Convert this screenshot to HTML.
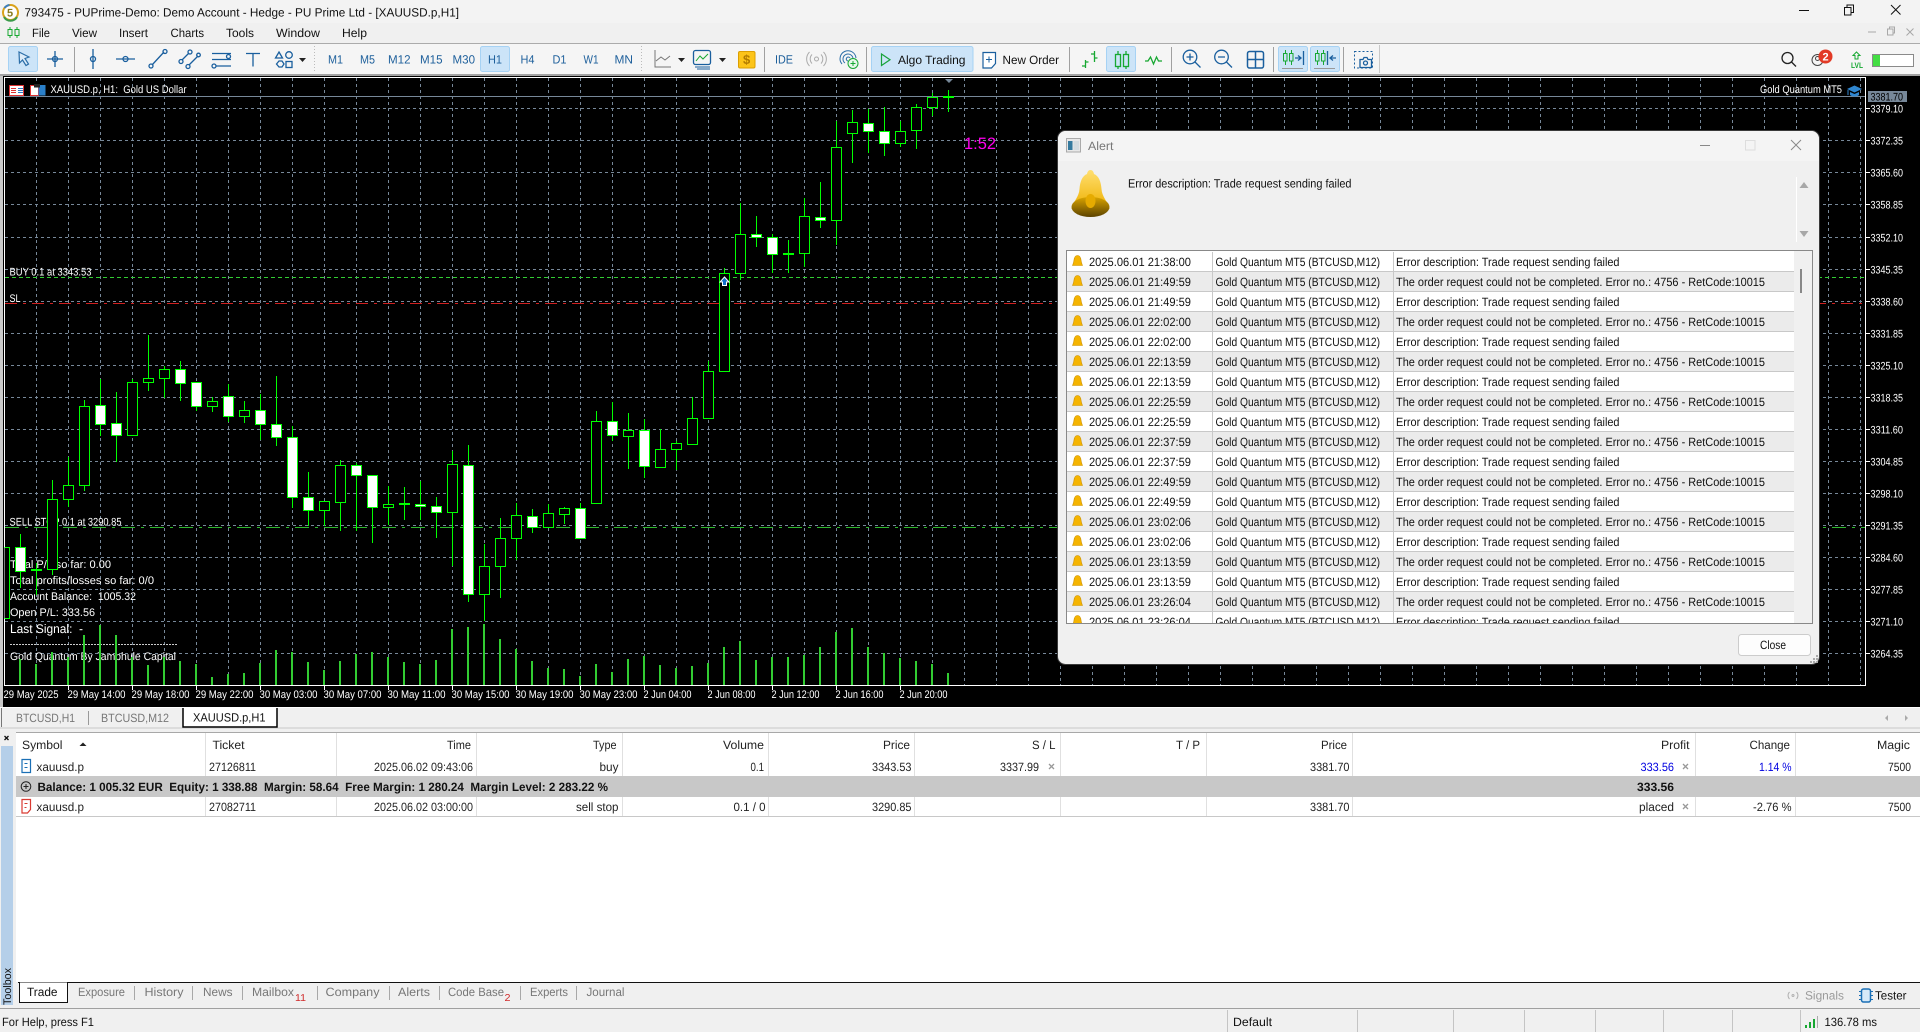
<!DOCTYPE html>
<html lang="en">
<head>
<meta charset="utf-8">
<title>793475 - PUPrime-Demo</title>
<style>
html,body{margin:0;padding:0;background:#f0f0f0;width:1920px;height:1032px;overflow:hidden}
svg{display:block}
text{font-family:"Liberation Sans",sans-serif;font-size:12px;white-space:pre;fill:#111;text-rendering:geometricPrecision}
.c text,text.c{font-size:11px;fill:#fff}
.tf text{fill:#1d5f9b}
.g text{fill:#777}
.h text{fill:#222}
.b text{font-weight:bold;fill:#111}
.ic{fill:none;stroke:#1a5f9e;stroke-width:1.3}
.gr{fill:none;stroke:#17a832;stroke-width:1.3}
.gt{fill:none;stroke:#17a832;stroke-width:1}
.sep{stroke:#a0a0a0;stroke-width:1;shape-rendering:crispEdges}
.btn{fill:#cce4f8;stroke:#a6d2f4}
</style>
</head>
<body>
<svg xmlns="http://www.w3.org/2000/svg" width="1920" height="1032" viewBox="0 0 1920 1032">
<defs>
<linearGradient id="bg1" x1="0" y1="0" x2="0" y2="1"><stop offset="0" stop-color="#ffdf70"/><stop offset="1" stop-color="#eeb000"/></linearGradient>
<linearGradient id="bg2" x1="0" y1="0" x2="0" y2="1"><stop offset="0" stop-color="#d9a400"/><stop offset="1" stop-color="#5c4300"/></linearGradient>
<clipPath id="lc"><rect x="1067" y="252" width="727" height="371"/></clipPath>
<clipPath id="ch"><rect x="5" y="78" width="1860" height="607"/></clipPath>
<g id="sb"><path d="M0 -5.500C-2.300 -5.500 -3.300 -3 -3.500 -1C-3.700 1.500 -4.500 3 -5 4.500H5C4.500 3 3.700 1.500 3.500 -1C3.300 -3 2.300 -5.500 0 -5.500Z" fill="#f5b400" stroke="#c98f00" stroke-width=".6"/></g>
</defs>

<!-- window chrome -->
<rect width="1920" height="23" fill="#f3f3f3"/>
<rect y="23" width="1920" height="20" fill="#f0f0f0"/>
<rect y="43" width="1920" height="1" fill="#ababab"/>
<rect y="44" width="1920" height="30" fill="#f5f5f5"/>
<rect y="74" width="1920" height="2" fill="#a2a2a2"/>

<!-- title bar -->
<circle cx="10.500" cy="12.500" r="7.500" fill="#fff" stroke="#d9a21b" stroke-width="2"/>
<path d="M4 17a7.500 7.500 0 0 0 13 0" fill="none" stroke="#3a9a4a" stroke-width="2"/>
<path d="M4.500 8a7.500 7.500 0 0 1 5-3" fill="none" stroke="#3b7fc0" stroke-width="2"/>
<text x="7" y="16.500" style="font-size:11px;font-weight:bold;fill:#8a7a20">5</text>
<text x="24.500" y="16.500" textLength="434.500" lengthAdjust="spacingAndGlyphs">793475 - PUPrime-Demo: Demo Account - Hedge - PU Prime Ltd - [XAUUSD.p,H1]</text>
<path d="M1799 10.500h10" stroke="#111" fill="none"/>
<path d="M1844.500 7.500h6.500v7.500h-6.500zM1847 7.500v-2.500h6.500v7.500h-2.500" stroke="#111" fill="none"/>
<path d="M1891 5l9.500 9.500M1900.500 5l-9.500 9.500" stroke="#111" fill="none"/>

<!-- menu -->
<g fill="none" stroke="#17a832"><path d="M10 27v11M17 27v11"/><rect x="8" y="29.500" width="4" height="6" fill="#f0f0f0"/><rect x="15" y="29.500" width="4" height="6" fill="#f0f0f0"/></g>
<text x="32" y="37" textLength="18" lengthAdjust="spacingAndGlyphs">File</text>
<text x="72" y="37" textLength="25" lengthAdjust="spacingAndGlyphs">View</text>
<text x="119" y="37" textLength="29" lengthAdjust="spacingAndGlyphs">Insert</text>
<text x="170.500" y="37" textLength="33.500" lengthAdjust="spacingAndGlyphs">Charts</text>
<text x="226" y="37" textLength="28" lengthAdjust="spacingAndGlyphs">Tools</text>
<text x="276" y="37" textLength="44" lengthAdjust="spacingAndGlyphs">Window</text>
<text x="342" y="37" textLength="25" lengthAdjust="spacingAndGlyphs">Help</text>
<g stroke="#a8a8a8" fill="none"><path d="M1868 32h8"/><path d="M1887.500 34v-5h5.500v6h-5.500zM1889.500 29v-2h5v6h-1.500"/><path d="M1906.500 28.500l7 7M1913.500 28.500l-7 7"/></g>

<!-- toolbar -->
<rect class="btn" x="8.500" y="46.500" width="29" height="25" rx="2"/>
<path d="M19 52l10 5-4 1.500 3.500 5.500-2.500 1.500-3.500-5.500-3 3z" fill="#dcebf8" stroke="#2b6ea8" stroke-width="1.200"/>
<g class="ic">
<path d="M47 59h16M55 51v16"/><circle cx="55" cy="59" r="2.500"/>
<path d="M93 49v20"/><circle cx="93" cy="59" r="2.500"/>
<path d="M116 59h19"/><circle cx="125.500" cy="59" r="2.500"/>
<path d="M152 65l12-13"/><circle cx="151" cy="66" r="2"/><circle cx="165" cy="51.500" r="2"/>
<path d="M182 60l7-7M189 65l9-9"/><circle cx="190" cy="52" r="2"/><circle cx="181" cy="61.500" r="2"/><circle cx="188" cy="66.500" r="2"/><circle cx="198.500" cy="55" r="1.800"/>
<path d="M212 53.500h19M212 59.500h19M216 66h15"/><circle cx="228.500" cy="56.500" r="2"/><circle cx="214" cy="66" r="2"/>
<path d="M246 53.500h14M253 53.500v13"/>
<path d="M279 52l3.500 6h-7z"/><circle cx="289" cy="55" r="3.300"/><path d="M276.500 64l2.500-3 3 0 2 3-2 3h-3z"/><rect x="286" y="61.500" width="6" height="6"/>
</g>
<path d="M299 58h7l-3.500 4z" fill="#222"/>
<path class="sep" d="M74.500 47v25"/>
<path d="M314.500 46v27" stroke="#bbb" stroke-dasharray="1 2"/>

<rect class="btn" x="480.500" y="46.500" width="29" height="25" rx="2"/>
<g class="tf">
<text x="328" y="63.500" textLength="15" lengthAdjust="spacingAndGlyphs">M1</text>
<text x="360" y="63.500" textLength="15" lengthAdjust="spacingAndGlyphs">M5</text>
<text x="388" y="63.500" textLength="22.500" lengthAdjust="spacingAndGlyphs">M12</text>
<text x="420" y="63.500" textLength="22.500" lengthAdjust="spacingAndGlyphs">M15</text>
<text x="452.500" y="63.500" textLength="22.500" lengthAdjust="spacingAndGlyphs">M30</text>
<text x="488" y="63.500" textLength="14" lengthAdjust="spacingAndGlyphs">H1</text>
<text x="520.500" y="63.500" textLength="14" lengthAdjust="spacingAndGlyphs">H4</text>
<text x="552.500" y="63.500" textLength="14" lengthAdjust="spacingAndGlyphs">D1</text>
<text x="583.500" y="63.500" textLength="15" lengthAdjust="spacingAndGlyphs">W1</text>
<text x="614.500" y="63.500" textLength="18.500" lengthAdjust="spacingAndGlyphs">MN</text>
<text x="775" y="63.500" textLength="18" lengthAdjust="spacingAndGlyphs">IDE</text>
</g>
<path d="M641.500 46v27" stroke="#bbb" stroke-dasharray="1 2"/>
<path d="M655 50v17h16M656 61l5-4 4 3 5-4" fill="none" stroke="#777" stroke-width="1"/>
<path d="M678 58h7l-3.500 4z" fill="#222"/>
<rect x="693.500" y="50.500" width="17" height="14" rx="2" class="ic"/>
<path d="M696 61l4-5 3 3 5-5" fill="none" stroke="#17a832"/>
<path d="M695 67h15M697 69h13" stroke="#1a5f9e"/>
<path d="M719 58h7l-3.500 4z" fill="#222"/>
<rect x="738.500" y="51.500" width="16.500" height="16.500" rx="1.500" fill="#fcc419" stroke="#dc9f00"/>
<text x="743" y="64" style="font-size:13px;font-weight:bold;fill:#b07a00">$</text>
<path class="sep" d="M764.500 47v25"/>
<g fill="none" stroke="#aaa"><circle cx="816.500" cy="59" r="2"/><path d="M812 54.500a6.500 6.500 0 0 0 0 9M821 54.500a6.500 6.500 0 0 1 0 9M809.500 52a10 10 0 0 0 0 14M823.500 52a10 10 0 0 1 0 14"/></g>
<g fill="none" stroke="#2b6ea8"><path d="M842 64a8 8 0 1 1 14-6M845 63a5 5 0 1 1 8-4M848 61a2 2 0 1 1 2-3"/></g>
<circle cx="853" cy="63.500" r="5" fill="#e8f8ec" stroke="#17a832"/><path d="M850.500 63.500h5M853 61v5" stroke="#17a832"/>
<path class="sep" d="M866.500 47v25"/>
<rect class="btn" x="871.500" y="46.500" width="101.500" height="25" rx="2"/>
<path d="M881.500 54v11.500l8.500-5.750z" fill="none" stroke="#19a23a" stroke-width="1.200"/>
<text x="898" y="64" textLength="67.500" lengthAdjust="spacingAndGlyphs">Algo Trading</text>
<path d="M983 52.500h12.500v11l-4 4.500h-8.500z" fill="#fff" stroke="#1a5f9e" stroke-width="1.200"/>
<path d="M986 59.500h6M989 56.500v6" stroke="#1a5f9e"/>
<text x="1002.500" y="64" textLength="56.500" lengthAdjust="spacingAndGlyphs">New Order</text>
<path class="sep" d="M1069.500 47v25"/>
<path class="gr" d="M1085.500 60v8M1082 66h3.500M1085.500 62h3M1094.500 51v11M1091 54h3.500M1094.500 58h3"/>
<rect class="btn" x="1106.500" y="46.500" width="29" height="25" rx="2"/>
<path class="gr" d="M1118 51v3M1118 66v3M1126 51v3M1126 66v3"/>
<rect class="gr" x="1115.500" y="54.500" width="5" height="12"/><rect class="gr" x="1123.500" y="54.500" width="5" height="12"/>
<path class="gr" d="M1145 61h3l2.500-4 3 7 3-7 2 4h3.500"/>
<path class="sep" d="M1171.500 47v25"/>
<g class="ic">
<circle cx="1190" cy="57" r="6.800"/><path d="M1195 62l5.500 5.500M1186.500 57h7M1190 53.500v7"/>
<circle cx="1221.500" cy="57" r="6.800"/><path d="M1226.500 62l5.500 5.500M1218 57h7"/>
<rect x="1247.500" y="51.500" width="16" height="16.500" rx="2" style="stroke-width:1.500"/><path d="M1255.500 51.500v16.500M1247.500 59.500h16" style="stroke-width:1.500"/>
</g>
<path class="sep" d="M1273.500 47v25"/>
<rect class="btn" x="1278.500" y="46.500" width="29" height="25" rx="2"/>
<rect class="btn" x="1310.500" y="46.500" width="29" height="25" rx="2"/>
<path class="gt" d="M1285.500 50v3M1285.500 61v4M1291.500 50v3M1291.500 61v4"/><rect class="gt" x="1283.500" y="53.500" width="3.500" height="7.500"/><rect class="gt" x="1289.500" y="53.500" width="3.500" height="7.500"/>
<path class="ic" d="M1295 58h6M1298 55.500l3 2.500-3 2.500M1303.500 51v14"/>
<path d="M1282 68.500h21M1314 68.500h21" stroke="#999"/>
<path class="gt" d="M1317.500 50v3M1317.500 61v4M1323.500 50v3M1323.500 61v4"/><rect class="gt" x="1315.500" y="53.500" width="3.500" height="7.500"/><rect class="gt" x="1321.500" y="53.500" width="3.500" height="7.500"/>
<path class="ic" d="M1336 58h-6M1333 55.500l-3 2.500 3 2.500M1327.500 51v14"/>
<path class="sep" d="M1343.500 47v25"/>
<rect x="1354.500" y="51.500" width="18" height="16.500" fill="none" stroke="#1a5f9e" stroke-dasharray="2 2"/>
<path class="ic" d="M1360 67.500v-8h3l1-2h3l1 2h3.500v8z"/><circle class="ic" cx="1365.500" cy="63" r="2"/>
<path d="M1379.500 45v28" stroke="#c8c8c8"/>

<circle cx="1787.500" cy="58" r="5.500" fill="none" stroke="#222" stroke-width="1.300"/><path d="M1791.500 62l4.500 4.500" stroke="#222" stroke-width="1.300"/>
<circle cx="1817.500" cy="60" r="5.500" fill="none" stroke="#444"/><circle cx="1817.500" cy="58.500" r="2" fill="none" stroke="#444"/>
<circle cx="1825.500" cy="56.500" r="7" fill="#e23a26"/>
<text x="1822.500" y="60.500" style="font-size:11px;fill:#fff;font-weight:bold">2</text>
<path d="M1856.500 52l3.500 3.500h-2v3.500h-3v-3.500h-2z" fill="none" stroke="#17a832"/>
<text x="1851" y="68" textLength="12" lengthAdjust="spacingAndGlyphs" style="font-size:8px;fill:#17a832;font-weight:bold">LVL</text>
<rect x="1872.500" y="54.500" width="41" height="12" fill="#fff" stroke="#8a8a8a"/>
<rect x="1873" y="55" width="7" height="11" fill="#43dd43"/>

<!-- chart -->
<rect y="76" width="1920" height="631" fill="#000"/>
<rect y="76" width="3" height="631" fill="#c9c9c9"/>
<path d="M4.500 77.500H1865.500V685.500H4.500z" fill="none" stroke="#fff"/>
<g clip-path="url(#ch)" fill="none" stroke="#778899">
<path stroke-dasharray="3 3" d="M5 108.500H1865M5 140.500H1865M5 172.500H1865M5 204.500H1865M5 237.500H1865M5 269.500H1865M5 301.500H1865M5 333.500H1865M5 365.500H1865M5 397.500H1865M5 429.500H1865M5 461.500H1865M5 493.500H1865M5 525.500H1865M5 557.500H1865M5 589.500H1865M5 621.500H1865M5 653.500H1865"/>
<path stroke-dasharray="3 3" d="M36.500 78V685M68.500 78V685M100.500 78V685M132.500 78V685M164.500 78V685M196.500 78V685M228.500 78V685M260.500 78V685M292.500 78V685M324.500 78V685M356.500 78V685M388.500 78V685M420.500 78V685M452.500 78V685M484.500 78V685M516.500 78V685M548.500 78V685M580.500 78V685M612.500 78V685M644.500 78V685M676.500 78V685M708.500 78V685M740.500 78V685M772.500 78V685M804.500 78V685M836.500 78V685M868.500 78V685M900.500 78V685M932.500 78V685M964.500 78V685M996.500 78V685M1028.500 78V685M1060.500 78V685M1092.500 78V685M1124.500 78V685M1156.500 78V685M1188.500 78V685M1220.500 78V685M1252.500 78V685M1284.500 78V685M1316.500 78V685M1348.500 78V685M1380.500 78V685M1412.500 78V685M1444.500 78V685M1476.500 78V685M1508.500 78V685M1540.500 78V685M1572.500 78V685M1604.500 78V685M1636.500 78V685M1668.500 78V685M1700.500 78V685M1732.500 78V685M1764.500 78V685M1796.500 78V685M1828.500 78V685M1860.500 78V685"/>
<path d="M5 96.500H1865"/>
<path d="M5 277.500H1865" stroke="#32cd32" stroke-dasharray="4 3"/>
<path d="M5 303.500H1865" stroke="#d02020" stroke-dasharray="12 6 3 6"/>
<path d="M5 527.500H1865" stroke="#2eb82e" stroke-dasharray="14 6 3 6"/>
</g>

<!-- chart overlay text -->
<g class="c">
<text x="50.500" y="93" textLength="136" lengthAdjust="spacingAndGlyphs">XAUUSD.p, H1:  Gold US Dollar</text>
<text x="1760" y="93" textLength="82" lengthAdjust="spacingAndGlyphs">Gold Quantum MT5</text>
<text x="9.500" y="275.500" textLength="82" lengthAdjust="spacingAndGlyphs">BUY 0.1 at 3343.53</text>
<text x="9.500" y="302" textLength="11" lengthAdjust="spacingAndGlyphs">SL</text>
<text x="9.500" y="525.500" textLength="112" lengthAdjust="spacingAndGlyphs">SELL STOP 0.1 at 3290.85</text>
<text x="10" y="568" textLength="101" lengthAdjust="spacingAndGlyphs">Total P/L so far: 0.00</text>
<text x="10" y="584" textLength="144" lengthAdjust="spacingAndGlyphs">Total profits/losses so far: 0/0</text>
<text x="10" y="600" textLength="126" lengthAdjust="spacingAndGlyphs">Account Balance:  1005.32</text>
<text x="10" y="616" textLength="85" lengthAdjust="spacingAndGlyphs">Open P/L: 333.56</text>
<text x="10" y="633" textLength="73" lengthAdjust="spacingAndGlyphs" style="font-size:12.500px;fill:#fff">Last Signal:  -</text>
<path d="M10 644.500H178" stroke="#ccc" stroke-dasharray="2 1"/>
<text x="10" y="660" textLength="166" lengthAdjust="spacingAndGlyphs">Gold Quantum By Jambhule Capital</text>
</g>
<rect x="9.500" y="85.500" width="14" height="10" fill="#fff" stroke="#d33" stroke-width="1"/><path d="M11 88.500h5M11 90.500h5M11 92.500h5" stroke="#d33"/><path d="M18 88.500h5M18 90.500h5M18 92.500h5" stroke="#2a77c4"/>
<rect x="30.500" y="85.500" width="8" height="10" fill="#fff" stroke="#d33"/><rect x="38.500" y="85" width="7" height="10.500" fill="#2a7fc9"/><rect x="34" y="84" width="6" height="3.500" fill="#222"/>
<path d="M1847 89l7.500-3.500 7.500 3.500-7.500 3.500z" fill="#2f86d0"/><path d="M1850 92v3c2 2 7 2 9 0v-3l-4.500 2z" fill="#2f86d0"/><path d="M1848 90v5" stroke="#2f86d0"/>

<!-- volume -->
<path fill="none" stroke="#32cd32" stroke-width="2" d="M20 685V659M36 685V664M52 685V652M68 685V657M84 685V635M100 685V625M116 685V635M132 685V657M148 685V665M164 685V657M180 685V661M196 685V664M212 685V677M228 685V674M244 685V673M260 685V663M276 685V650M292 685V652M308 685V662M324 685V670M340 685V661M356 685V654M372 685V652M388 685V657M404 685V662M420 685V664M436 685V660M452 685V629M468 685V627M484 685V624M500 685V639M516 685V649M532 685V661M548 685V668M564 685V669M580 685V676M596 685V664M612 685V672M628 685V659M644 685V656M660 685V665M676 685V668M692 685V666M708 685V663M724 685V647M740 685V641M756 685V660M772 685V657M788 685V657M804 685V655M820 685V647M836 685V632M852 685V628M868 685V647M884 685V653M900 685V658M916 685V661M932 685V664M948 685V673"/>

<!-- candles -->
<path fill="none" stroke="#00ff00" d="M20.500 534V588M36.500 563V595M52.500 480V575M68.500 457V507M84.500 400V491M100.500 379V436M116.500 392V462M132.500 379V435M148.500 335V391M164.500 366V398M180.500 361V401M196.500 382V411M212.500 397V412M228.500 384V422M244.500 401V423M260.500 394V440M276.500 376V446M292.500 426V508M308.500 472V526M324.500 501V526M340.500 460V531M356.500 463V531M372.500 475V543M388.500 486V525M404.500 487V520M420.500 481V520M436.500 497V538M452.500 451V566M468.500 445V602M484.500 544V621M500.500 518V598M516.500 503V560M532.500 509V533M548.500 504V527M564.500 507V524M580.500 503V538M596.500 411V503M612.500 402V441M628.500 413V469M644.500 419V478M660.500 429V468M676.500 441V470M692.500 397V444M708.500 361V418M724.500 268V371M740.500 203V280M756.500 216V247M772.500 234V273M788.500 240V273M804.500 198V267M820.500 182V228M836.500 121V245M852.500 110V163M868.500 109V153M884.500 107V156M900.500 121V147M916.500 104V149M932.500 93V116M948.500 90V112"/>
<path fill="none" stroke="#00ff00" stroke-width="2" d="M31 570H42M399 504H410M783 254H794M943 97H954"/>
<path fill="#000" stroke="#00ff00" d="M4.500 547.500H9.500V618.500H4.500M47.500 499.500h10V569.500h-10zM63.500 485.500h10V499.500h-10zM79.500 406.500h10V485.500h-10zM127.500 382.500h10V435.500h-10zM143.500 378.500h10V382.500h-10zM159.500 369.500h10V378.500h-10zM207.500 401.500h10V406.500h-10zM239.500 410.500h10V416.500h-10zM319.500 501.500h10V510.500h-10zM335.500 465.500h10V502.500h-10zM383.500 504.500h10V507.500h-10zM447.500 464.500h10V512.500h-10zM479.500 566.500h10V594.500h-10zM495.500 538.500h10V566.500h-10zM511.500 515.500h10V538.500h-10zM543.500 513.500h10V527.500h-10zM559.500 508.500h10V514.500h-10zM591.500 421.500h10V503.500h-10zM623.500 430.500h10V436.500h-10zM655.500 449.500h10V467.500h-10zM671.500 443.500h10V449.500h-10zM687.500 418.500h10V444.500h-10zM703.500 371.500h10V418.500h-10zM719.500 273.500h10V371.500h-10zM735.500 234.500h10V273.500h-10zM799.500 216.500h10V253.500h-10zM831.500 147.500h10V220.500h-10zM847.500 122.500h10V133.500h-10zM895.500 131.500h10V143.500h-10zM911.500 107.500h10V130.500h-10zM927.500 97.500h10V107.500h-10z"/>
<path fill="#fff" stroke="#00ff00" d="M15.500 547.500h10V571.500h-10zM95.500 405.500h10V424.500h-10zM111.500 423.500h10V435.500h-10zM175.500 369.500h10V383.500h-10zM191.500 382.500h10V406.500h-10zM223.500 396.500h10V416.500h-10zM255.500 410.500h10V424.500h-10zM271.500 424.500h10V437.500h-10zM287.500 437.500h10V497.500h-10zM303.500 497.500h10V510.500h-10zM351.500 465.500h10V475.500h-10zM367.500 475.500h10V507.500h-10zM415.500 504.500h10V506.500h-10zM431.500 506.500h10V512.500h-10zM463.500 465.500h10V594.500h-10zM527.500 516.500h10V527.500h-10zM575.500 508.500h10V538.500h-10zM607.500 421.500h10V435.500h-10zM639.500 430.500h10V466.500h-10zM751.500 234.500h10V237.500h-10zM767.500 237.500h10V254.500h-10zM815.500 217.500h10V220.500h-10zM863.500 123.500h10V131.500h-10zM879.500 131.500h10V143.500h-10z"/>
<path d="M724.500 277l4.500 5h-2.500v3.500h-4V282h-2.500z" fill="#1470c8" stroke="#fff"/>
<path d="M945 79h8l-4 4z" fill="#778899"/>
<text x="964" y="149" textLength="32" lengthAdjust="spacingAndGlyphs" style="font-size:16.500px;fill:#ff00ee">1:52</text>

<!-- price axis -->
<path stroke="#fff" d="M1866 108.500h4M1866 140.500h4M1866 172.500h4M1866 204.500h4M1866 237.500h4M1866 269.500h4M1866 301.500h4M1866 333.500h4M1866 365.500h4M1866 397.500h4M1866 429.500h4M1866 461.500h4M1866 493.500h4M1866 525.500h4M1866 557.500h4M1866 589.500h4M1866 621.500h4M1866 653.500h4"/>
<rect x="1868" y="91" width="39" height="11" fill="#778899"/>
<text x="1870.500" y="100.500" textLength="32.500" lengthAdjust="spacingAndGlyphs" style="font-size:11px;fill:#000">3381.70</text>
<g class="c">
<text x="1870.500" y="112.500" textLength="32.500" lengthAdjust="spacingAndGlyphs">3379.10</text>
<text x="1870.500" y="144.500" textLength="32.500" lengthAdjust="spacingAndGlyphs">3372.35</text>
<text x="1870.500" y="176.500" textLength="32.500" lengthAdjust="spacingAndGlyphs">3365.60</text>
<text x="1870.500" y="208.500" textLength="32.500" lengthAdjust="spacingAndGlyphs">3358.85</text>
<text x="1870.500" y="241.500" textLength="32.500" lengthAdjust="spacingAndGlyphs">3352.10</text>
<text x="1870.500" y="273.500" textLength="32.500" lengthAdjust="spacingAndGlyphs">3345.35</text>
<text x="1870.500" y="305.500" textLength="32.500" lengthAdjust="spacingAndGlyphs">3338.60</text>
<text x="1870.500" y="337.500" textLength="32.500" lengthAdjust="spacingAndGlyphs">3331.85</text>
<text x="1870.500" y="369.500" textLength="32.500" lengthAdjust="spacingAndGlyphs">3325.10</text>
<text x="1870.500" y="401.500" textLength="32.500" lengthAdjust="spacingAndGlyphs">3318.35</text>
<text x="1870.500" y="433.500" textLength="32.500" lengthAdjust="spacingAndGlyphs">3311.60</text>
<text x="1870.500" y="465.500" textLength="32.500" lengthAdjust="spacingAndGlyphs">3304.85</text>
<text x="1870.500" y="497.500" textLength="32.500" lengthAdjust="spacingAndGlyphs">3298.10</text>
<text x="1870.500" y="529.500" textLength="32.500" lengthAdjust="spacingAndGlyphs">3291.35</text>
<text x="1870.500" y="561.500" textLength="32.500" lengthAdjust="spacingAndGlyphs">3284.60</text>
<text x="1870.500" y="593.500" textLength="32.500" lengthAdjust="spacingAndGlyphs">3277.85</text>
<text x="1870.500" y="625.500" textLength="32.500" lengthAdjust="spacingAndGlyphs">3271.10</text>
<text x="1870.500" y="657.500" textLength="32.500" lengthAdjust="spacingAndGlyphs">3264.35</text>
</g>

<!-- time axis -->
<path stroke="#fff" d="M68.500 686v4M132.500 686v4M196.500 686v4M260.500 686v4M324.500 686v4M388.500 686v4M452.500 686v4M516.500 686v4M580.500 686v4M644.500 686v4M708.500 686v4M772.500 686v4M836.500 686v4M900.500 686v4"/>
<g class="c">
<text x="3.500" y="698" textLength="55" lengthAdjust="spacingAndGlyphs">29 May 2025</text>
<text x="67.500" y="698" textLength="58" lengthAdjust="spacingAndGlyphs">29 May 14:00</text>
<text x="131.500" y="698" textLength="58" lengthAdjust="spacingAndGlyphs">29 May 18:00</text>
<text x="195.500" y="698" textLength="58" lengthAdjust="spacingAndGlyphs">29 May 22:00</text>
<text x="259.500" y="698" textLength="58" lengthAdjust="spacingAndGlyphs">30 May 03:00</text>
<text x="323.500" y="698" textLength="58" lengthAdjust="spacingAndGlyphs">30 May 07:00</text>
<text x="387.500" y="698" textLength="58" lengthAdjust="spacingAndGlyphs">30 May 11:00</text>
<text x="451.500" y="698" textLength="58" lengthAdjust="spacingAndGlyphs">30 May 15:00</text>
<text x="515.500" y="698" textLength="58" lengthAdjust="spacingAndGlyphs">30 May 19:00</text>
<text x="579.500" y="698" textLength="58" lengthAdjust="spacingAndGlyphs">30 May 23:00</text>
<text x="643.500" y="698" textLength="48" lengthAdjust="spacingAndGlyphs">2 Jun 04:00</text>
<text x="707.500" y="698" textLength="48" lengthAdjust="spacingAndGlyphs">2 Jun 08:00</text>
<text x="771.500" y="698" textLength="48" lengthAdjust="spacingAndGlyphs">2 Jun 12:00</text>
<text x="835.500" y="698" textLength="48" lengthAdjust="spacingAndGlyphs">2 Jun 16:00</text>
<text x="899.500" y="698" textLength="48" lengthAdjust="spacingAndGlyphs">2 Jun 20:00</text>
</g>

<!-- chart tabs -->
<rect y="707" width="1920" height="1" fill="#fff"/>
<rect y="708" width="1920" height="20" fill="#f0f0f0"/>
<rect y="727" width="1920" height="2" fill="#dcdcdc"/>
<path d="M1.500 708v19" stroke="#777"/>
<path d="M183 708V727H277V708" fill="#fff" stroke="#000" stroke-width="1.500"/>
<g class="g">
<text x="16" y="722" textLength="59" lengthAdjust="spacingAndGlyphs">BTCUSD,H1</text>
<text x="101" y="722" textLength="68" lengthAdjust="spacingAndGlyphs">BTCUSD,M12</text>
</g>
<path d="M88.500 711v14" stroke="#999"/>
<text x="193" y="721.500" textLength="72.500" lengthAdjust="spacingAndGlyphs">XAUUSD.p,H1</text>
<path d="M1888 715v6l-3-3zM1905 715v6l3-3z" fill="#aaa"/>

<!-- toolbox -->
<rect y="729" width="1920" height="280" fill="#f0f0f0"/>
<rect x="16" y="733" width="1904" height="249" fill="#fff"/>
<rect x="16" y="732" width="1904" height="1" fill="#a8a8a8"/>
<rect x="1" y="746" width="12" height="259" fill="#b5cfe9"/>
<path d="M4.500 736l4 4M8.500 736l-4 4" stroke="#111" stroke-width="1.300"/>
<text transform="translate(11 1005) rotate(-90)" textLength="37" lengthAdjust="spacingAndGlyphs" style="font-size:11px;fill:#111">Toolbox</text>
<rect x="16" y="776" width="1904" height="21" fill="#c8c8c8"/>
<path stroke="#e0e0e0" d="M205.500 733v43M336.500 733v43M476.500 733v43M622.500 733v43M768.500 733v43M914.500 733v43M1060.500 733v43M1206.500 733v43M1352.500 733v43M1695.500 733v43M1795.500 733v43M205.500 797v19M336.500 797v19M476.500 797v19M622.500 797v19M768.500 797v19M914.500 797v19M1060.500 797v19M1206.500 797v19M1352.500 797v19M1695.500 797v19M1795.500 797v19"/>
<rect x="16" y="816" width="1904" height="1" fill="#c8c8c8"/>
<g class="h">
<text x="22" y="749" textLength="40.500" lengthAdjust="spacingAndGlyphs">Symbol</text>
<text x="212.500" y="749" textLength="32" lengthAdjust="spacingAndGlyphs">Ticket</text>
<text x="447" y="749" textLength="24" lengthAdjust="spacingAndGlyphs">Time</text>
<text x="593" y="749" textLength="23.500" lengthAdjust="spacingAndGlyphs">Type</text>
<text x="723" y="749" textLength="41" lengthAdjust="spacingAndGlyphs">Volume</text>
<text x="883" y="749" textLength="27" lengthAdjust="spacingAndGlyphs">Price</text>
<text x="1032" y="749" textLength="23.500" lengthAdjust="spacingAndGlyphs">S / L</text>
<text x="1176" y="749" textLength="24" lengthAdjust="spacingAndGlyphs">T / P</text>
<text x="1321" y="749" textLength="26" lengthAdjust="spacingAndGlyphs">Price</text>
<text x="1661" y="749" textLength="28.500" lengthAdjust="spacingAndGlyphs">Profit</text>
<text x="1749.500" y="749" textLength="40.500" lengthAdjust="spacingAndGlyphs">Change</text>
<text x="1877" y="749" textLength="33" lengthAdjust="spacingAndGlyphs">Magic</text>

<text x="36.500" y="771" textLength="47.500" lengthAdjust="spacingAndGlyphs">xauusd.p</text>
<text x="209" y="771" textLength="47" lengthAdjust="spacingAndGlyphs">27126811</text>
<text x="374" y="771" textLength="99" lengthAdjust="spacingAndGlyphs">2025.06.02 09:43:06</text>
<text x="599.500" y="771" textLength="19" lengthAdjust="spacingAndGlyphs">buy</text>
<text x="750.500" y="771" textLength="13.500" lengthAdjust="spacingAndGlyphs">0.1</text>
<text x="872" y="771" textLength="39.500" lengthAdjust="spacingAndGlyphs">3343.53</text>
<text x="1000" y="771" textLength="39" lengthAdjust="spacingAndGlyphs">3337.99</text>
<text x="1310" y="771" textLength="39.500" lengthAdjust="spacingAndGlyphs">3381.70</text>
<text x="1640.500" y="771" textLength="33.500" lengthAdjust="spacingAndGlyphs" style="fill:#0000e0">333.56</text>
<text x="1759" y="771" textLength="32.500" lengthAdjust="spacingAndGlyphs" style="fill:#0000e0">1.14 %</text>
<text x="1888" y="771" textLength="23" lengthAdjust="spacingAndGlyphs">7500</text>

<text x="36.500" y="811" textLength="47.500" lengthAdjust="spacingAndGlyphs">xauusd.p</text>
<text x="209" y="811" textLength="47" lengthAdjust="spacingAndGlyphs">27082711</text>
<text x="374" y="811" textLength="99" lengthAdjust="spacingAndGlyphs">2025.06.02 03:00:00</text>
<text x="576" y="811" textLength="42.500" lengthAdjust="spacingAndGlyphs">sell stop</text>
<text x="733.500" y="811" textLength="32" lengthAdjust="spacingAndGlyphs">0.1 / 0</text>
<text x="872" y="811" textLength="39.500" lengthAdjust="spacingAndGlyphs">3290.85</text>
<text x="1310" y="811" textLength="39.500" lengthAdjust="spacingAndGlyphs">3381.70</text>
<text x="1639" y="811" textLength="35" lengthAdjust="spacingAndGlyphs">placed</text>
<text x="1753" y="811" textLength="38.500" lengthAdjust="spacingAndGlyphs">-2.76 %</text>
<text x="1888" y="811" textLength="23" lengthAdjust="spacingAndGlyphs">7500</text>
</g>
<path d="M83 742.500l3.500 3.500h-7z" fill="#222"/>
<path d="M22 759.500h8.500v13h-8.500z" fill="#fff" stroke="#1a6fb5" stroke-width="1.200"/><path d="M24.500 763.500h3M24.500 767.500h3" stroke="#1a6fb5"/>
<path d="M22 799.500h8.500v10l-3 3.500h-5.500z" fill="#fff" stroke="#d93a32" stroke-width="1.200"/><path d="M24.500 803.500h3M24.500 807.500h2" stroke="#d93a32"/>
<circle cx="26" cy="786.500" r="4.800" fill="none" stroke="#222"/><path d="M23.500 786.500h5M26 784v5" stroke="#222"/>
<g class="b">
<text x="37.500" y="791" textLength="570.500" lengthAdjust="spacingAndGlyphs">Balance: 1 005.32 EUR  Equity: 1 338.88  Margin: 58.64  Free Margin: 1 280.24  Margin Level: 2 283.22 %</text>
<text x="1637" y="791" textLength="37" lengthAdjust="spacingAndGlyphs">333.56</text>
</g>
<path d="M1049 764l5 5M1054 764l-5 5M1683 764l5 5M1688 764l-5 5M1683 804l5 5M1688 804l-5 5" stroke="#999" stroke-width="1.300"/>

<!-- toolbox tabs -->
<rect x="18" y="982" width="1902" height="1" fill="#111"/>
<path d="M19.500 982.500V1002.500H67.500V982.500" fill="#fff" stroke="#111"/>
<text x="27" y="996" textLength="30.500" lengthAdjust="spacingAndGlyphs">Trade</text>
<g class="g">
<text x="78" y="996" textLength="47" lengthAdjust="spacingAndGlyphs">Exposure</text>
<text x="144.500" y="996" textLength="39" lengthAdjust="spacingAndGlyphs">History</text>
<text x="203" y="996" textLength="29.500" lengthAdjust="spacingAndGlyphs">News</text>
<text x="252" y="996" textLength="42" lengthAdjust="spacingAndGlyphs">Mailbox</text>
<text x="325.500" y="996" textLength="54" lengthAdjust="spacingAndGlyphs">Company</text>
<text x="398" y="996" textLength="32" lengthAdjust="spacingAndGlyphs">Alerts</text>
<text x="448" y="996" textLength="56" lengthAdjust="spacingAndGlyphs">Code Base</text>
<text x="530" y="996" textLength="38" lengthAdjust="spacingAndGlyphs">Experts</text>
<text x="586.500" y="996" textLength="38" lengthAdjust="spacingAndGlyphs">Journal</text>
</g>
<text x="295" y="1001" textLength="11" lengthAdjust="spacingAndGlyphs" style="font-size:10px;fill:#d02a2a">11</text>
<text x="504.500" y="1001" textLength="6" lengthAdjust="spacingAndGlyphs" style="font-size:10px;fill:#d02a2a">2</text>
<path d="M134.500 986v14M192.500 986v14M242.500 986v14M317.500 986v14M389.500 986v14M439.500 986v14M520.500 986v14M576.500 986v14" stroke="#a8a8a8"/>
<g fill="none" stroke="#b0b0b0"><circle cx="1793" cy="995.500" r="1"/><path d="M1789.500 992a5 5 0 0 0 0 7M1796.500 992a5 5 0 0 1 0 7"/></g>
<text x="1805" y="999.500" textLength="39" lengthAdjust="spacingAndGlyphs" style="fill:#9a9a9a">Signals</text>
<rect x="1861.500" y="989" width="9" height="13" rx="2" fill="#d6e9f8" stroke="#1a6fb5" stroke-width="1.500"/>
<path d="M1859 991.500h2M1859 995.500h2M1859 999.500h2M1871 991.500h2M1871 995.500h2M1871 999.500h2" stroke="#1a6fb5"/>
<text x="1875" y="999.500" textLength="31.500" lengthAdjust="spacingAndGlyphs">Tester</text>

<!-- status bar -->
<rect y="1008" width="1920" height="1" fill="#a0a0a0"/>
<rect y="1009" width="1920" height="23" fill="#f0f0f0"/>
<text x="2" y="1026" textLength="92" lengthAdjust="spacingAndGlyphs">For Help, press F1</text>
<text x="1233" y="1026" textLength="39" lengthAdjust="spacingAndGlyphs">Default</text>
<path stroke="#c4c4c4" d="M1227.500 1010v22M1357.500 1010v22M1453.500 1010v22M1524.500 1010v22M1595.500 1010v22M1663.500 1010v22M1732.500 1010v22M1800.500 1010v22"/>
<path stroke="#17a832" stroke-width="2" d="M1806 1028v-3M1810 1028v-6M1814 1028v-9"/>
<path stroke="#aaa" d="M1817.500 1028v-12"/>
<text x="1824.500" y="1026" textLength="52.500" lengthAdjust="spacingAndGlyphs">136.78 ms</text>

<!-- alert dialog -->
<rect x="1057.500" y="130.500" width="762" height="534" rx="8" fill="#f0f0f0" stroke="#3a3a3a"/>
<path d="M1058 161V139a8 8 0 0 1 8-8H1811a8 8 0 0 1 8 8V161z" fill="#f4f4f4"/>
<rect x="1066.500" y="138.500" width="14" height="13.500" fill="#e8e8e8" stroke="#aaa"/>
<rect x="1068" y="141" width="4.500" height="9" fill="#357a9e"/><rect x="1073.500" y="141" width="5.500" height="9" fill="#d4dce0"/>
<text x="1088" y="150" textLength="25.500" lengthAdjust="spacingAndGlyphs" style="fill:#777">Alert</text>
<path d="M1700 145.500h10" stroke="#888"/>
<rect x="1745.500" y="140.500" width="9.500" height="9.500" fill="none" stroke="#ddd"/>
<path d="M1791 140l10 10M1801 140l-10 10" stroke="#888"/>

<path d="M1090.500 170c-2 0-3 1.500-3.500 4-5 2-7 8-7.500 15-.5 8-6 12-8 20h38c-2-8-7.500-12-8-20-.5-7-2.500-13-7.500-15-.5-2.500-1.500-4-3.500-4z" fill="url(#bg1)"/>
<ellipse cx="1090.500" cy="207" rx="19" ry="10" fill="url(#bg2)"/>
<ellipse cx="1090.500" cy="201" rx="5" ry="7" fill="#e6ab00"/>
<text x="1128" y="187.500" textLength="223.500" lengthAdjust="spacingAndGlyphs">Error description: Trade request sending failed</text>
<path d="M1796.500 177v65" stroke="#fff"/>
<path d="M1804 182l4.500 6h-9zM1804 237l4.500-6h-9z" fill="#a8a8a8"/>

<rect x="1066.500" y="250.500" width="746" height="373" fill="#f0f0f0" stroke="#888"/>
<rect x="1067" y="251" width="727" height="372" fill="#fff"/>
<g clip-path="url(#lc)">
<g fill="#ebebeb"><rect x="1067" y="272" width="727" height="20"/><rect x="1067" y="312" width="727" height="20"/><rect x="1067" y="352" width="727" height="20"/><rect x="1067" y="392" width="727" height="20"/><rect x="1067" y="432" width="727" height="20"/><rect x="1067" y="472" width="727" height="20"/><rect x="1067" y="512" width="727" height="20"/><rect x="1067" y="552" width="727" height="20"/><rect x="1067" y="592" width="727" height="20"/></g>
<path stroke="#c8c8c8" d="M1067 271.500h727M1067 291.500h727M1067 311.500h727M1067 331.500h727M1067 351.500h727M1067 371.500h727M1067 391.500h727M1067 411.500h727M1067 431.500h727M1067 451.500h727M1067 471.500h727M1067 491.500h727M1067 511.500h727M1067 531.500h727M1067 551.500h727M1067 571.500h727M1067 591.500h727M1067 611.500h727M1212.500 252v371M1393.500 252v371"/>
<use href="#sb" x="1077.500" y="261"/><use href="#sb" x="1077.500" y="281"/><use href="#sb" x="1077.500" y="301"/><use href="#sb" x="1077.500" y="321"/><use href="#sb" x="1077.500" y="341"/><use href="#sb" x="1077.500" y="361"/><use href="#sb" x="1077.500" y="381"/><use href="#sb" x="1077.500" y="401"/><use href="#sb" x="1077.500" y="421"/><use href="#sb" x="1077.500" y="441"/><use href="#sb" x="1077.500" y="461"/><use href="#sb" x="1077.500" y="481"/><use href="#sb" x="1077.500" y="501"/><use href="#sb" x="1077.500" y="521"/><use href="#sb" x="1077.500" y="541"/><use href="#sb" x="1077.500" y="561"/><use href="#sb" x="1077.500" y="581"/><use href="#sb" x="1077.500" y="601"/><use href="#sb" x="1077.500" y="621"/>

<text x="1089" y="266" textLength="102" lengthAdjust="spacingAndGlyphs">2025.06.01 21:38:00</text><text x="1215.500" y="266" textLength="164.500" lengthAdjust="spacingAndGlyphs">Gold Quantum MT5 (BTCUSD,M12)</text><text x="1396" y="266" textLength="223.500" lengthAdjust="spacingAndGlyphs">Error description: Trade request sending failed</text>
<text x="1089" y="286" textLength="102" lengthAdjust="spacingAndGlyphs">2025.06.01 21:49:59</text><text x="1215.500" y="286" textLength="164.500" lengthAdjust="spacingAndGlyphs">Gold Quantum MT5 (BTCUSD,M12)</text><text x="1396" y="286" textLength="369" lengthAdjust="spacingAndGlyphs">The order request could not be completed. Error no.: 4756 - RetCode:10015</text>
<text x="1089" y="306" textLength="102" lengthAdjust="spacingAndGlyphs">2025.06.01 21:49:59</text><text x="1215.500" y="306" textLength="164.500" lengthAdjust="spacingAndGlyphs">Gold Quantum MT5 (BTCUSD,M12)</text><text x="1396" y="306" textLength="223.500" lengthAdjust="spacingAndGlyphs">Error description: Trade request sending failed</text>
<text x="1089" y="326" textLength="102" lengthAdjust="spacingAndGlyphs">2025.06.01 22:02:00</text><text x="1215.500" y="326" textLength="164.500" lengthAdjust="spacingAndGlyphs">Gold Quantum MT5 (BTCUSD,M12)</text><text x="1396" y="326" textLength="369" lengthAdjust="spacingAndGlyphs">The order request could not be completed. Error no.: 4756 - RetCode:10015</text>
<text x="1089" y="346" textLength="102" lengthAdjust="spacingAndGlyphs">2025.06.01 22:02:00</text><text x="1215.500" y="346" textLength="164.500" lengthAdjust="spacingAndGlyphs">Gold Quantum MT5 (BTCUSD,M12)</text><text x="1396" y="346" textLength="223.500" lengthAdjust="spacingAndGlyphs">Error description: Trade request sending failed</text>
<text x="1089" y="366" textLength="102" lengthAdjust="spacingAndGlyphs">2025.06.01 22:13:59</text><text x="1215.500" y="366" textLength="164.500" lengthAdjust="spacingAndGlyphs">Gold Quantum MT5 (BTCUSD,M12)</text><text x="1396" y="366" textLength="369" lengthAdjust="spacingAndGlyphs">The order request could not be completed. Error no.: 4756 - RetCode:10015</text>
<text x="1089" y="386" textLength="102" lengthAdjust="spacingAndGlyphs">2025.06.01 22:13:59</text><text x="1215.500" y="386" textLength="164.500" lengthAdjust="spacingAndGlyphs">Gold Quantum MT5 (BTCUSD,M12)</text><text x="1396" y="386" textLength="223.500" lengthAdjust="spacingAndGlyphs">Error description: Trade request sending failed</text>
<text x="1089" y="406" textLength="102" lengthAdjust="spacingAndGlyphs">2025.06.01 22:25:59</text><text x="1215.500" y="406" textLength="164.500" lengthAdjust="spacingAndGlyphs">Gold Quantum MT5 (BTCUSD,M12)</text><text x="1396" y="406" textLength="369" lengthAdjust="spacingAndGlyphs">The order request could not be completed. Error no.: 4756 - RetCode:10015</text>
<text x="1089" y="426" textLength="102" lengthAdjust="spacingAndGlyphs">2025.06.01 22:25:59</text><text x="1215.500" y="426" textLength="164.500" lengthAdjust="spacingAndGlyphs">Gold Quantum MT5 (BTCUSD,M12)</text><text x="1396" y="426" textLength="223.500" lengthAdjust="spacingAndGlyphs">Error description: Trade request sending failed</text>
<text x="1089" y="446" textLength="102" lengthAdjust="spacingAndGlyphs">2025.06.01 22:37:59</text><text x="1215.500" y="446" textLength="164.500" lengthAdjust="spacingAndGlyphs">Gold Quantum MT5 (BTCUSD,M12)</text><text x="1396" y="446" textLength="369" lengthAdjust="spacingAndGlyphs">The order request could not be completed. Error no.: 4756 - RetCode:10015</text>
<text x="1089" y="466" textLength="102" lengthAdjust="spacingAndGlyphs">2025.06.01 22:37:59</text><text x="1215.500" y="466" textLength="164.500" lengthAdjust="spacingAndGlyphs">Gold Quantum MT5 (BTCUSD,M12)</text><text x="1396" y="466" textLength="223.500" lengthAdjust="spacingAndGlyphs">Error description: Trade request sending failed</text>
<text x="1089" y="486" textLength="102" lengthAdjust="spacingAndGlyphs">2025.06.01 22:49:59</text><text x="1215.500" y="486" textLength="164.500" lengthAdjust="spacingAndGlyphs">Gold Quantum MT5 (BTCUSD,M12)</text><text x="1396" y="486" textLength="369" lengthAdjust="spacingAndGlyphs">The order request could not be completed. Error no.: 4756 - RetCode:10015</text>
<text x="1089" y="506" textLength="102" lengthAdjust="spacingAndGlyphs">2025.06.01 22:49:59</text><text x="1215.500" y="506" textLength="164.500" lengthAdjust="spacingAndGlyphs">Gold Quantum MT5 (BTCUSD,M12)</text><text x="1396" y="506" textLength="223.500" lengthAdjust="spacingAndGlyphs">Error description: Trade request sending failed</text>
<text x="1089" y="526" textLength="102" lengthAdjust="spacingAndGlyphs">2025.06.01 23:02:06</text><text x="1215.500" y="526" textLength="164.500" lengthAdjust="spacingAndGlyphs">Gold Quantum MT5 (BTCUSD,M12)</text><text x="1396" y="526" textLength="369" lengthAdjust="spacingAndGlyphs">The order request could not be completed. Error no.: 4756 - RetCode:10015</text>
<text x="1089" y="546" textLength="102" lengthAdjust="spacingAndGlyphs">2025.06.01 23:02:06</text><text x="1215.500" y="546" textLength="164.500" lengthAdjust="spacingAndGlyphs">Gold Quantum MT5 (BTCUSD,M12)</text><text x="1396" y="546" textLength="223.500" lengthAdjust="spacingAndGlyphs">Error description: Trade request sending failed</text>
<text x="1089" y="566" textLength="102" lengthAdjust="spacingAndGlyphs">2025.06.01 23:13:59</text><text x="1215.500" y="566" textLength="164.500" lengthAdjust="spacingAndGlyphs">Gold Quantum MT5 (BTCUSD,M12)</text><text x="1396" y="566" textLength="369" lengthAdjust="spacingAndGlyphs">The order request could not be completed. Error no.: 4756 - RetCode:10015</text>
<text x="1089" y="586" textLength="102" lengthAdjust="spacingAndGlyphs">2025.06.01 23:13:59</text><text x="1215.500" y="586" textLength="164.500" lengthAdjust="spacingAndGlyphs">Gold Quantum MT5 (BTCUSD,M12)</text><text x="1396" y="586" textLength="223.500" lengthAdjust="spacingAndGlyphs">Error description: Trade request sending failed</text>
<text x="1089" y="606" textLength="102" lengthAdjust="spacingAndGlyphs">2025.06.01 23:26:04</text><text x="1215.500" y="606" textLength="164.500" lengthAdjust="spacingAndGlyphs">Gold Quantum MT5 (BTCUSD,M12)</text><text x="1396" y="606" textLength="369" lengthAdjust="spacingAndGlyphs">The order request could not be completed. Error no.: 4756 - RetCode:10015</text>
<text x="1089" y="626" textLength="102" lengthAdjust="spacingAndGlyphs">2025.06.01 23:26:04</text><text x="1215.500" y="626" textLength="164.500" lengthAdjust="spacingAndGlyphs">Gold Quantum MT5 (BTCUSD,M12)</text><text x="1396" y="626" textLength="223.500" lengthAdjust="spacingAndGlyphs">Error description: Trade request sending failed</text>
</g>
<rect x="1800" y="269" width="2" height="24" fill="#888"/>
<rect x="1738.500" y="634.500" width="72" height="21" rx="3" fill="#fdfdfd" stroke="#ccc"/>
<text x="1760" y="649" textLength="26" lengthAdjust="spacingAndGlyphs">Close</text>
<path d="M1816 655h2v2h-2zM1813 658h2v2h-2zM1816 658h2v2h-2zM1810 661h2v2h-2zM1813 661h2v2h-2zM1816 661h2v2h-2z" fill="#aaa"/>
</svg>
</body>
</html>
